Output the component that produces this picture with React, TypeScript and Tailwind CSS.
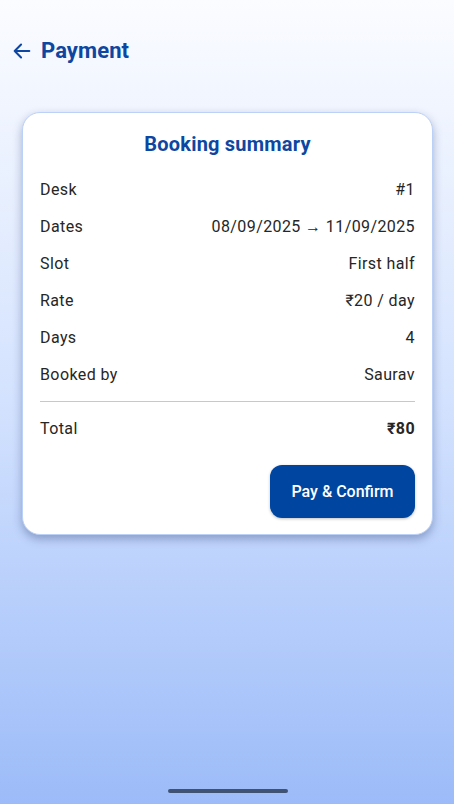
import React from 'react';

const rows: [string, string][] = [
  ['Desk', '#1'],
  ['Dates', '08/09/2025 → 11/09/2025'],
  ['Slot', 'First half'],
  ['Rate', '₹20 / day'],
  ['Days', '4'],
  ['Booked by', 'Saurav'],
];

const App: React.FC = () => {
  return (
    <div
      className="relative w-[454px] h-[804px] overflow-hidden bg-gradient-to-b from-[#fbfcff] via-[#d3e2fe] to-[#9cbbf8] text-[#262626]"
      style={{ fontFamily: 'Roboto, "Noto Sans", sans-serif' }}
    >
      {/* header */}
      <div className="flex items-center gap-[8px] pl-[11px] pt-[37px] h-[64px]">
        <svg className="w-[22px] h-[22px] text-[#0d47a1]" viewBox="0 0 24 24" fill="none" stroke="currentColor" strokeWidth={2.2} strokeLinecap="round" strokeLinejoin="round">
          <path d="M20 12H4M11 5l-7 7 7 7" />
        </svg>
        <h1 className="text-[22px] font-bold text-[#0d47a1] tracking-[0.1px]">Payment</h1>
      </div>

      {/* card */}
      <div className="ml-[22px] w-[411px] mt-[48px] bg-white rounded-[18px] border border-[#bcd1f8] shadow-[0_4px_10px_rgba(30,50,100,0.35)] px-[17px] pt-[17px] pb-[16px]">
        <h2 className="text-center text-[20px] font-bold text-[#0d47a1] leading-[28px] tracking-[0.2px]">Booking summary</h2>
        <div className="mt-[21px] flex flex-col gap-[15px]">
          {rows.map(([k, v]) => (
            <div key={k} className="flex justify-between items-center text-[16px] leading-[22px] tracking-[0.4px]">
              <span>{k}</span>
              <span>{v}</span>
            </div>
          ))}
        </div>
        <div className="mt-[15px] h-px bg-[#c4c8d0]" />
        <div className="mt-[16px] flex justify-between items-center text-[16px] leading-[22px] tracking-[0.4px]">
          <span>Total</span>
          <span className="font-bold">₹80</span>
        </div>
        <div className="mt-[25px] flex justify-end">
          <button className="w-[145px] h-[53px] rounded-[12px] bg-[#0046a1] text-white text-[16px] font-medium shadow-[0_1px_3px_rgba(0,0,0,0.25)]">
            Pay &amp; Confirm
          </button>
        </div>
      </div>

      {/* home indicator */}
      <div className="absolute bottom-[11px] left-[168px] w-[120px] h-[4px] rounded-full bg-[#3f5274]" />
    </div>
  );
};

export default App;
